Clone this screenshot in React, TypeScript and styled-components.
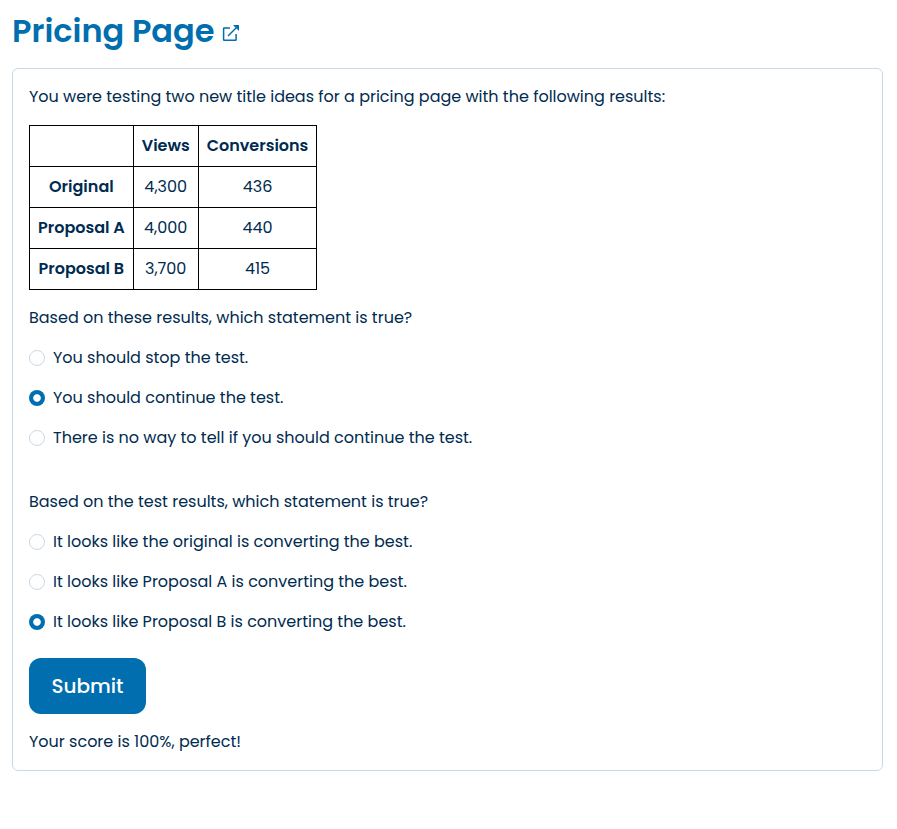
import React, { useState } from "react";
import styled, { createGlobalStyle } from "styled-components";

const GlobalStyle = createGlobalStyle`
  *, *::before, *::after { box-sizing: border-box; }
  body {
    margin: 0;
    background: #fff;
    color: #002b50;
    font: 400 16px/24px Poppins, Inter, sans-serif;
  }
`;

const Page = styled.main`
  padding: 7px 14px 0 12px;
`;

const Title = styled.h1`
  display: flex;
  align-items: center;
  gap: 7px;
  margin: 0 0 13px;
  color: #006eaf;
  font-size: 32px;
  font-weight: 600;
  line-height: 48px;
`;

const TitleLink = styled.a`
  display: flex;
  margin-top: 4px;
  color: inherit;
`;

const Card = styled.section`
  padding: 16px;
  border: 1px solid #c8d9e6;
  border-radius: 6px;
`;

const Text = styled.p`
  margin: 0;
`;

const Results = styled.table`
  margin: 16px 0;
  border-collapse: collapse;
`;

const Cell = styled.td`
  height: 41px;
  padding: 8px;
  border: 1px solid #000;
  text-align: center;
  white-space: nowrap;
`;

const HeadCell = styled(Cell)`
  font-weight: 600;
`;

const Question = styled.div`
  display: grid;
  gap: 16px;

  & + & { margin-top: 40px; }
`;

const Option = styled.label`
  display: flex;
  align-items: center;
  gap: 8px;
  cursor: pointer;
`;

const Radio = styled.input`
  appearance: none;
  flex: none;
  width: 16px;
  height: 16px;
  margin: 0;
  border: 1px solid #c8d9e6;
  border-radius: 50%;
  background: #fff;

  &:checked {
    border: 0;
    background: radial-gradient(circle, #fff 3.3px, #006eaf 4.3px);
  }
`;

const Submit = styled.button`
  display: block;
  width: 117px;
  height: 56px;
  margin: 24px 0 16px;
  padding: 0;
  border: 0;
  border-radius: 12px;
  background: #006eaf;
  color: #fff;
  font: inherit;
  font-size: 20px;
  font-weight: 500;
`;

const rows = [
  { name: "Original", views: "4,300", conversions: "436" },
  { name: "Proposal A", views: "4,000", conversions: "440" },
  { name: "Proposal B", views: "3,700", conversions: "415" },
];

const questions = [
  {
    text: "Based on these results, which statement is true?",
    answer: 1,
    options: [
      "You should stop the test.",
      "You should continue the test.",
      "There is no way to tell if you should continue the test.",
    ],
  },
  {
    text: "Based on the test results, which statement is true?",
    answer: 2,
    options: [
      "It looks like the original is converting the best.",
      "It looks like Proposal A is converting the best.",
      "It looks like Proposal B is converting the best.",
    ],
  },
];

const ExternalIcon = () => (
  <svg width="18" height="18" viewBox="0 0 18 18" fill="none" stroke="currentColor" strokeWidth="1.5">
    <path d="M8 3.9H2.2a.6.6 0 0 0-.6.6v11.2a.6.6 0 0 0 .6.6h11.3a.6.6 0 0 0 .6-.6V10" />
    <path d="M6 12 15.5 2.5" />
    <path d="M11 1h6v6l-2.2-2.2-1.6-1.6z" fill="currentColor" stroke="none" />
  </svg>
);

export default function App() {
  const [answers, setAnswers] = useState(questions.map((q) => q.answer));
  return (
    <>
      <GlobalStyle />
      <Page>
        <Title>
          Pricing Page
          <TitleLink aria-label="Open"><ExternalIcon /></TitleLink>
        </Title>
        <Card>
          <Text>
            You were testing two new title ideas for a pricing page with the following results:
          </Text>
          <Results>
            <thead>
              <tr>
                <HeadCell as="th" />
                <HeadCell as="th">Views</HeadCell>
                <HeadCell as="th">Conversions</HeadCell>
              </tr>
            </thead>
            <tbody>
              {rows.map((row) => (
                <tr key={row.name}>
                  <HeadCell as="th">{row.name}</HeadCell>
                  <Cell>{row.views}</Cell>
                  <Cell>{row.conversions}</Cell>
                </tr>
              ))}
            </tbody>
          </Results>
          {questions.map((question, qi) => (
            <Question key={question.text}>
              <Text>{question.text}</Text>
              {question.options.map((option, oi) => (
                <Option key={option}>
                  <Radio
                    type="radio"
                    name={`question-${qi}`}
                    checked={answers[qi] === oi}
                    onChange={() => setAnswers(answers.map((a, i) => (i === qi ? oi : a)))}
                  />
                  {option}
                </Option>
              ))}
            </Question>
          ))}
          <Submit type="button">Submit</Submit>
          <Text>Your score is 100%, perfect!</Text>
        </Card>
      </Page>
    </>
  );
}
